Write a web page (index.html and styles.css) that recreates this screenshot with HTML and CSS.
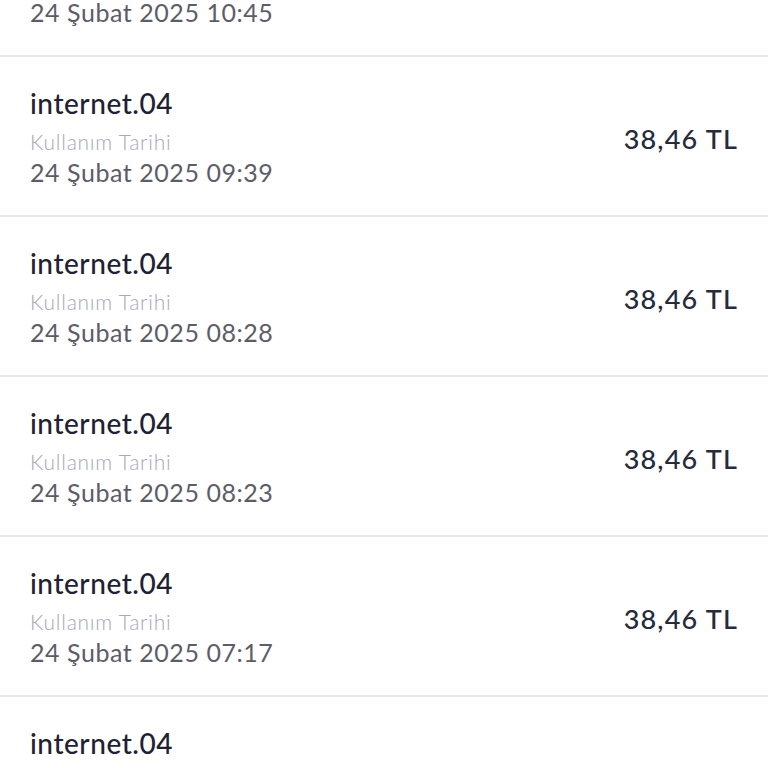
FILE: index.html
```html
<!DOCTYPE html>
<html lang="tr">
<head>
<meta charset="utf-8">
<link rel="stylesheet" href="styles.css">
</head>
<body>
<div class="list">
  <div class="row">
    <div class="info">
      <div class="title">internet.04</div>
      <div class="label">Kullanım Tarihi</div>
      <div class="date">24 Şubat 2025 10:45</div>
    </div>
    <div class="amount">38,46 TL</div>
  </div>
  <div class="row">
    <div class="info">
      <div class="title">internet.04</div>
      <div class="label">Kullanım Tarihi</div>
      <div class="date">24 Şubat 2025 09:39</div>
    </div>
    <div class="amount">38,46 TL</div>
  </div>
  <div class="row">
    <div class="info">
      <div class="title">internet.04</div>
      <div class="label">Kullanım Tarihi</div>
      <div class="date">24 Şubat 2025 08:28</div>
    </div>
    <div class="amount">38,46 TL</div>
  </div>
  <div class="row">
    <div class="info">
      <div class="title">internet.04</div>
      <div class="label">Kullanım Tarihi</div>
      <div class="date">24 Şubat 2025 08:23</div>
    </div>
    <div class="amount">38,46 TL</div>
  </div>
  <div class="row">
    <div class="info">
      <div class="title">internet.04</div>
      <div class="label">Kullanım Tarihi</div>
      <div class="date">24 Şubat 2025 07:17</div>
    </div>
    <div class="amount">38,46 TL</div>
  </div>
  <div class="row">
    <div class="info">
      <div class="title">internet.04</div>
      <div class="label">Kullanım Tarihi</div>
      <div class="date">24 Şubat 2025 06:58</div>
    </div>
    <div class="amount">38,46 TL</div>
  </div>
</div>
</body>
</html>
```

FILE: styles.css
```css
html, body {
  margin: 0;
  padding: 0;
  background: #ffffff;
  overflow: hidden;
}
body {
  font-family: Lato, "Open Sans", "Noto Sans", sans-serif;
  height: 768px;
}
.list {
  margin-top: -103px;
}
.row {
  display: flex;
  align-items: center;
  justify-content: space-between;
  height: 158px;
  padding: 0 30px;
  border-bottom: 2px solid #e6e6ec;
}
.info {
  display: flex;
  flex-direction: column;
  padding-bottom: 2px;
}
.title {
  font-size: 28px;
  line-height: 40px;
  color: #1f2233;
  font-weight: 500;
  letter-spacing: 0.55px;
}
.label {
  margin-top: 4px;
  font-size: 21px;
  line-height: 30px;
  color: #a6a8b8;
  font-weight: 300;
  letter-spacing: 0.75px;
}
.date {
  font-size: 25px;
  line-height: 30px;
  color: #5c5d68;
  letter-spacing: 0.55px;
}
.amount {
  padding-top: 4px;
  font-size: 27px;
  color: #262a3b;
  font-weight: 500;
  letter-spacing: 1.2px;
}
```
